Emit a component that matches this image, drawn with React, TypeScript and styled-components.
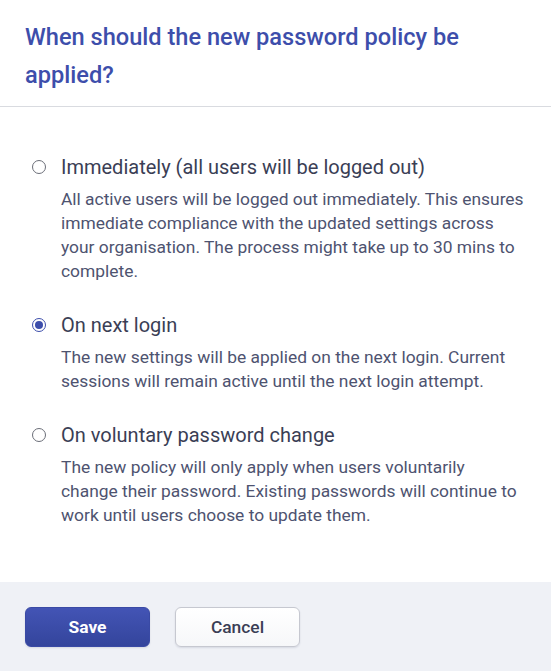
import React, { useState } from "react";
import styled, { createGlobalStyle } from "styled-components";

const GlobalStyle = createGlobalStyle`
  html, body {
    margin: 0;
    padding: 0;
    background: #ffffff;
  }
  * {
    box-sizing: border-box;
  }
`;

const Dialog = styled.div`
  display: flex;
  flex-direction: column;
  min-height: 100vh;
  font-family: Roboto, "Liberation Sans", sans-serif;
  background: #ffffff;
`;

const Header = styled.div`
  padding: 18px 25px 12px;
  border-bottom: 1px solid #d9dbe0;
`;

const Title = styled.h2`
  margin: 0;
  font-size: 23.6px;
  line-height: 38px;
  font-weight: 500;
  color: #3d4eab;
`;

const Body = styled.div`
  flex: 1;
  display: flex;
  flex-direction: column;
  gap: 27px;
  padding: 45px 25px 0 32px;
`;

const Option = styled.label`
  display: grid;
  grid-template-columns: 14px 1fr;
  column-gap: 15px;
  row-gap: 5px;
  cursor: pointer;
`;

const RadioDot = styled.span<{ $checked: boolean }>`
  width: 14px;
  height: 14px;
  margin-top: 8px;
  border-radius: 50%;
  border: 1.2px solid ${({ $checked }) => ($checked ? "#3d4eab" : "#6b6e78")};
  display: flex;
  align-items: center;
  justify-content: center;
  &::after {
    content: "";
    width: 8px;
    height: 8px;
    border-radius: 50%;
    background: ${({ $checked }) => ($checked ? "#3d4eab" : "transparent")};
  }
`;

const Label = styled.span`
  font-size: 20px;
  line-height: 30px;
  color: #3a3e55;
`;

const Description = styled.p`
  grid-column: 2;
  margin: 0;
  max-width: 464px;
  font-size: 17.4px;
  line-height: 24px;
  color: #4e5370;
`;

const Footer = styled.div`
  display: flex;
  gap: 25px;
  padding: 25px 25px 24px;
  background: #eff1f6;
`;

const Button = styled.button<{ $primary?: boolean }>`
  width: 125px;
  height: 40px;
  border-radius: 6px;
  font-family: Roboto, "Liberation Sans", sans-serif;
  font-size: 17.4px;
  font-weight: ${({ $primary }) => ($primary ? 700 : 500)};
  cursor: pointer;
  color: ${({ $primary }) => ($primary ? "#ffffff" : "#3a3e55")};
  border: 1px solid ${({ $primary }) => ($primary ? "#3a4aa5" : "#c6c8d0")};
  background: ${({ $primary }) =>
    $primary
      ? "linear-gradient(180deg, #4354b5 0%, #34459c 100%)"
      : "linear-gradient(180deg, #ffffff 0%, #f6f7f9 100%)"};
  box-shadow: 0 1px 2px rgba(30, 40, 80, 0.12);
`;

const options = [
  {
    id: "immediately",
    label: "Immediately (all users will be logged out)",
    description:
      "All active users will be logged out immediately. This ensures immediate compliance with the updated settings across your organisation. The process might take up to 30 mins to complete.",
  },
  {
    id: "next-login",
    label: "On next login",
    description:
      "The new settings will be applied on the next login. Current sessions will remain active until the next login attempt.",
  },
  {
    id: "voluntary",
    label: "On voluntary password change",
    description:
      "The new policy will only apply when users voluntarily change their password. Existing passwords will continue to work until users choose to update them.",
  },
];

export default function App() {
  const [selected, setSelected] = useState("next-login");

  return (
    <>
      <GlobalStyle />
      <Dialog>
        <Header>
          <Title>When should the new password policy be applied?</Title>
        </Header>
        <Body>
          {options.map((o) => (
            <Option key={o.id} onClick={() => setSelected(o.id)}>
              <RadioDot $checked={selected === o.id} />
              <Label>{o.label}</Label>
              <Description>{o.description}</Description>
            </Option>
          ))}
        </Body>
        <Footer>
          <Button $primary>Save</Button>
          <Button>Cancel</Button>
        </Footer>
      </Dialog>
    </>
  );
}
